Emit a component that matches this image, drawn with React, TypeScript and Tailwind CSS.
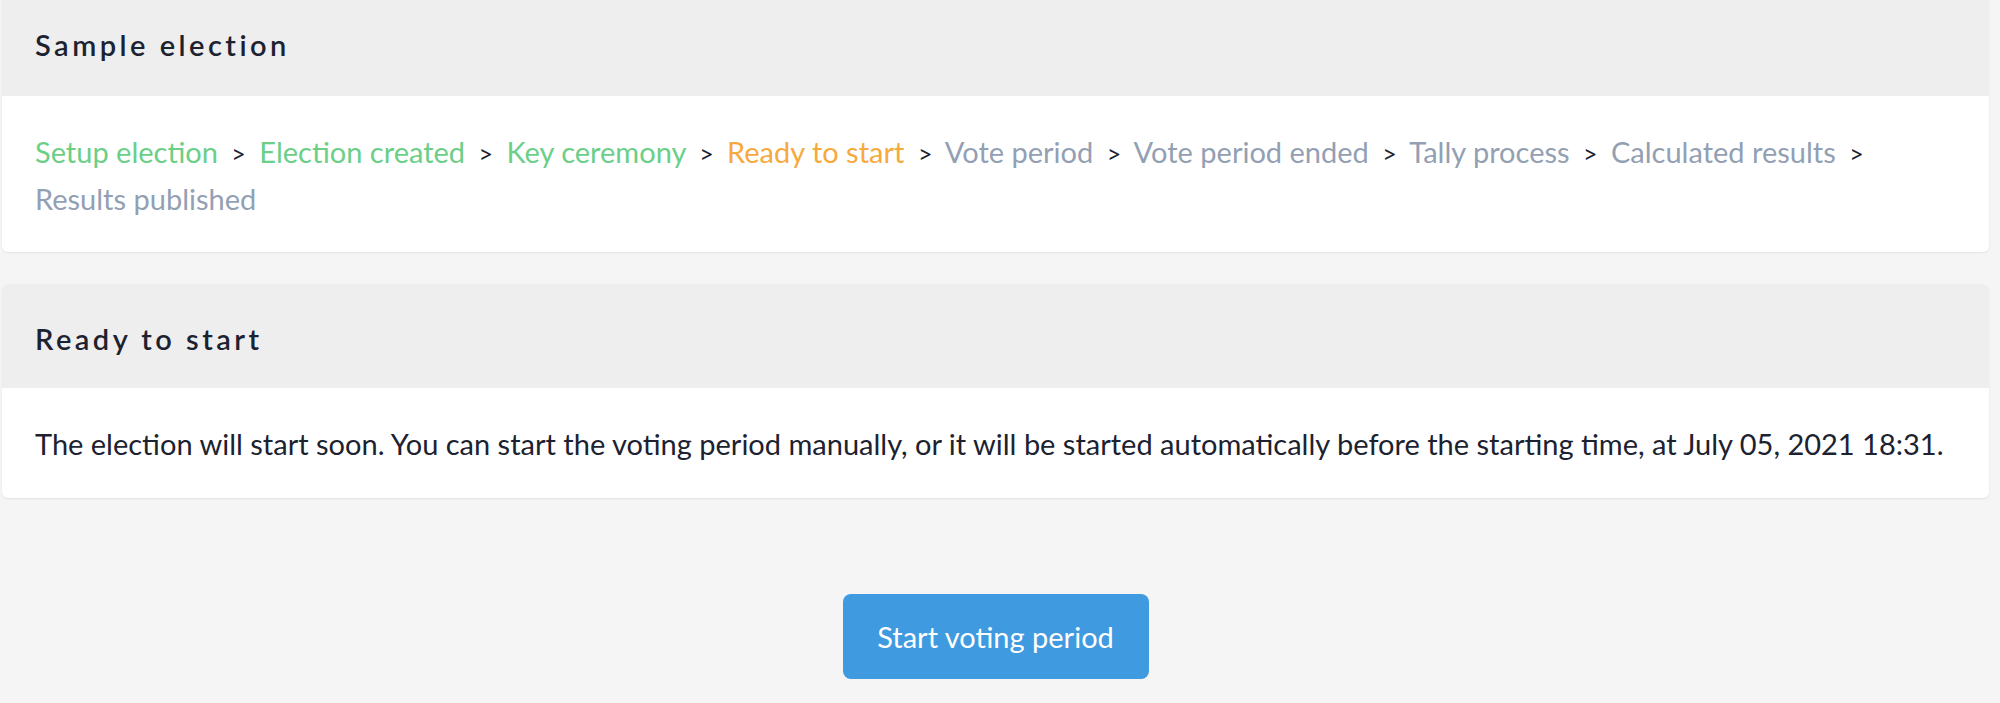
import React from 'react'

type Step = { label: string; state: 'done' | 'current' | 'todo' }

const steps: Step[] = [
  { label: 'Setup election', state: 'done' },
  { label: 'Election created', state: 'done' },
  { label: 'Key ceremony', state: 'done' },
  { label: 'Ready to start', state: 'current' },
  { label: 'Vote period', state: 'todo' },
  { label: 'Vote period ended', state: 'todo' },
  { label: 'Tally process', state: 'todo' },
  { label: 'Calculated results', state: 'todo' },
  { label: 'Results published', state: 'todo' },
]

const stateColor = {
  done: 'text-[#6bcf88]',
  current: 'text-[#f6aa3d]',
  todo: 'text-[#939fb3]',
}

export default function App() {
  return (
    <div className="min-h-[703px] bg-[#f5f5f5] pl-[2px] pr-[11px] font-['Lato',sans-serif] text-[#1c2230]">
      <section className="overflow-hidden rounded-b-[6px] bg-white shadow-[0_1px_2px_rgba(0,0,0,0.08)]">
        <header className="flex h-[96px] items-center bg-[#eeeeee] px-[33px] pb-[6px]">
          <h2 className="text-[29px] font-semibold tracking-[0.12em]">Sample election</h2>
        </header>
        <div className="px-[33px] pt-[33px] pb-[31px] text-[29px] leading-[45px]">
          {steps.map((s, i) => (
            <React.Fragment key={s.label}>
              <span className={`whitespace-nowrap ${stateColor[s.state]}`}>{s.label}</span>
              {i < steps.length - 1 && (
                <>
                  {' '}
                  <span className="mx-[6px] text-[25px]">&gt;</span>{' '}
                </>
              )}
            </React.Fragment>
          ))}
        </div>
      </section>

      <section className="mt-[32px] overflow-hidden rounded-[6px] bg-white shadow-[0_1px_2px_rgba(0,0,0,0.08)]">
        <header className="flex h-[104px] items-center bg-[#eeeeee] px-[33px] pt-[6px]">
          <h2 className="text-[29px] font-semibold tracking-[0.12em]">Ready to start</h2>
        </header>
        <div className="px-[33px] pt-[33px] pb-[32px] text-[29px] leading-[45px]">
          The election will start soon. You can start the voting period manually, or it will be started
          automatically before the starting time, at July 05, 2021 18:31.
        </div>
      </section>

      <div className="flex justify-center pt-[96px]">
        <button className="h-[85px] w-[306px] rounded-[8px] bg-[#409ae0] text-[29px] text-white">
          Start voting period
        </button>
      </div>
    </div>
  )
}
